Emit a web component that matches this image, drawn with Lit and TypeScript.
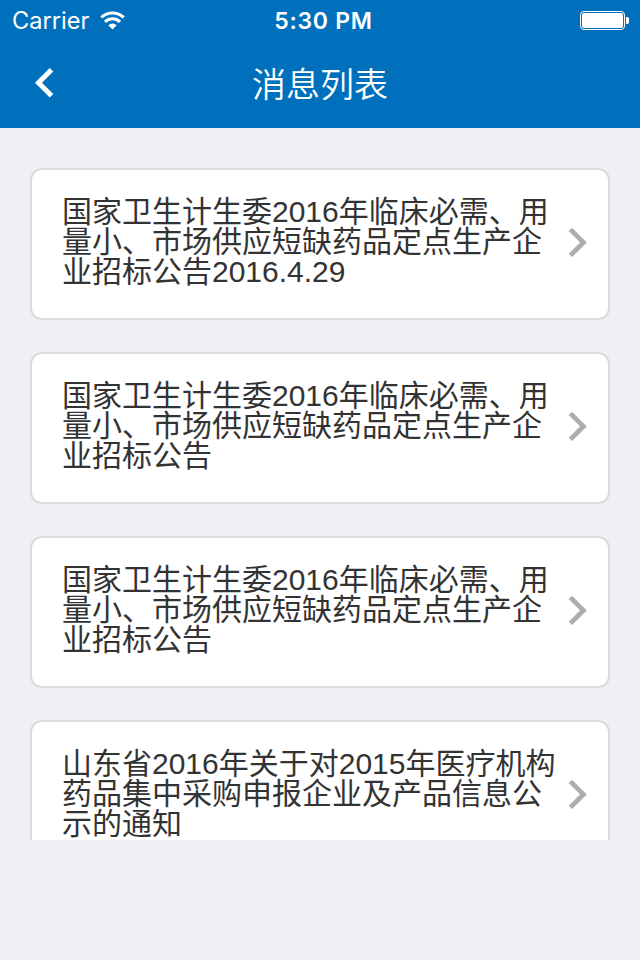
import { LitElement, html, css } from "lit";
import { customElement } from "lit/decorators.js";

const messages: string[][] = [
  ["国家卫生计生委2016年临床必需、用", "量小、市场供应短缺药品定点生产企", "业招标公告2016.4.29"],
  ["国家卫生计生委2016年临床必需、用", "量小、市场供应短缺药品定点生产企", "业招标公告"],
  ["国家卫生计生委2016年临床必需、用", "量小、市场供应短缺药品定点生产企", "业招标公告"],
  ["山东省2016年关于对2015年医疗机构", "药品集中采购申报企业及产品信息公", "示的通知"],
];

@customElement("app-root")
export class AppRoot extends LitElement {
  static styles = css`
    :host {
      display: flex;
      flex-direction: column;
      box-sizing: border-box;
      width: 640px;
      height: 960px;
      background: #efeff4;
      font-family: "Liberation Sans", "Noto Sans CJK SC", sans-serif;
      overflow: hidden;
    }
    header {
      flex: none;
      height: 128px;
      background: #0070bd;
      color: #fff;
    }
    .status {
      height: 40px;
      display: grid;
      grid-template-columns: 1fr auto 1fr;
      align-items: center;
      box-sizing: border-box;
      padding: 0 11px 0 12px;
      font: 24px/40px Inter, sans-serif;
    }
    .carrier { display: flex; align-items: center; gap: 11px; }
    .carrier span { font-size: 23.6px; padding-top: 2px; line-height: 38px; }
    .time { font-weight: 600; font-size: 23px; letter-spacing: 0.7px; line-height: 38px; padding: 2px 0 0 6px; }
    .battery { justify-self: end; }
    svg { display: block; }
    .nav {
      height: 88px;
      display: grid;
      grid-template-columns: 90px 1fr 90px;
      align-items: center;
    }
    .back { margin: -3px 0 0 34px; }
    h1 { margin: 0; font-size: 34px; line-height: 86px; padding-bottom: 2px; font-weight: 350; text-align: center; font-family: "Noto Sans CJK SC", sans-serif; }
    .list {
      height: 712px;
      box-sizing: border-box;
      overflow: hidden;
      padding: 40px 30px 0;
      display: flex;
      flex-direction: column;
      gap: 32px;
    }
    .card {
      flex: none;
      height: 152px;
      box-sizing: border-box;
      border: 2px solid #dcdcdd;
      border-radius: 12px;
      background: #fff;
      display: flex;
      justify-content: space-between;
      padding: 27px 20px 0 30px;
    }
    .text { font-size: 30px; line-height: 30px; color: #333; white-space: nowrap; }
    .chevron { margin-top: 29px; flex: none; }
  `;

  render() {
    return html`
      <header>
        <div class="status">
          <div class="carrier">
            <span>Carrier</span>
            <svg width="26" height="19" viewBox="0 0 26 19" fill="none" stroke="#fff" stroke-width="3.2">
              <path d="M1.3 6.4a16.4 16.4 0 0 1 22.4 0M5 10.8a10.8 10.8 0 0 1 15 0" />
              <path d="M8.3 14.2a6.2 6.2 0 0 1 8.4 0l-4.2 4.2z" fill="#fff" stroke="none" />
            </svg>
          </div>
          <span class="time">5:30 PM</span>
          <svg class="battery" width="49" height="19" viewBox="0 0 49 19">
            <rect x=".5" y=".5" width="44" height="18" rx="3.5" fill="none" stroke="#fff" />
            <rect x="2" y="2" width="41" height="15" rx="2" fill="#fff" />
            <path d="M46 6h1.2a1.8 1.8 0 0 1 1.8 1.8v3.4a1.8 1.8 0 0 1-1.8 1.8H46z" fill="#fff" />
          </svg>
        </div>
        <div class="nav">
          <svg class="back" width="20" height="32" viewBox="0 0 20 32" fill="none" stroke="#fff" stroke-width="5">
            <path d="M17.5 2.8L4.5 15.8l13 13" />
          </svg>
          <h1>消息列表</h1>
        </div>
      </header>
      <main class="list">
        ${messages.map((lines) => html`
          <article class="card">
            <div class="text">${lines.map((l) => html`<div>${l}</div>`)}</div>
            <svg class="chevron" width="20" height="32" viewBox="0 0 20 32" fill="none" stroke="#adadad" stroke-width="4.8">
              <path d="M2.4 3.4l13 13-13 13" />
            </svg>
          </article>`)}
      </main>
    `;
  }
}
